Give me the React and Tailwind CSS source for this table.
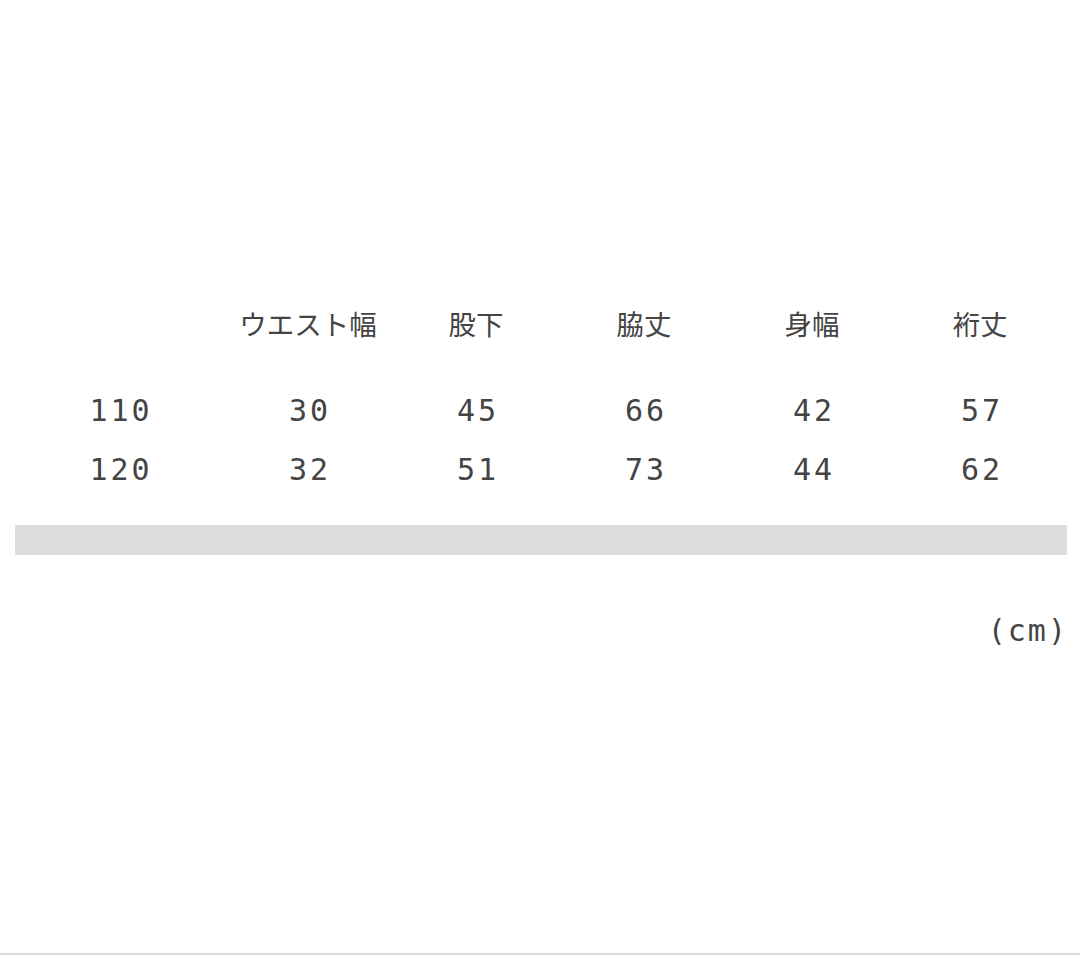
import React from 'react';

const headers = ['ウエスト幅', '股下', '脇丈', '身幅', '裄丈'];
const rows = [
    { size: '110', values: ['30', '45', '66', '42', '57'] },
    { size: '120', values: ['32', '51', '73', '44', '62'] },
];

const mono = "font-['DejaVu_Sans_Mono','Liberation_Mono',monospace]";
const jp = "font-['Noto_Sans_CJK_JP','Noto_Sans',sans-serif]";

const App = () => {
    return (
        <div className="h-[955px] bg-white border-b-2 border-[#dadada] text-[#444444] flex flex-col">
            <div className="h-[303px]" />

            {/* Header */}
            <div className="flex pl-[34px] h-[40px] items-center">
                <div className="w-[190px]" />
                {headers.map(h => (
                    <div key={h} className={`w-[168px] text-center text-[27.5px] leading-[40px] ${jp}`}>{h}</div>
                ))}
            </div>

            {/* Rows */}
            <div className="mt-[38px] flex flex-col">
                {rows.map(r => (
                    <div key={r.size} className={`flex pl-[36px] h-[59px] items-center text-[30px] tracking-[3px] ${mono}`}>
                        <div className="w-[170px] text-center">{r.size}</div>
                        <div className="w-[20px]" />
                        {r.values.map((v, i) => (
                            <div key={i} className="w-[168px] text-center">{v}</div>
                        ))}
                    </div>
                ))}
            </div>

            <div className="mt-[26px] ml-[15px] mr-[13px] h-[30px] bg-[#dcdcdc]" />

            <div className={`mt-[56px] pr-[12px] h-[40px] leading-[40px] text-right text-[30px] tracking-[2px] ${mono}`}>(cm)</div>
        </div>
    );
};

export default App;
